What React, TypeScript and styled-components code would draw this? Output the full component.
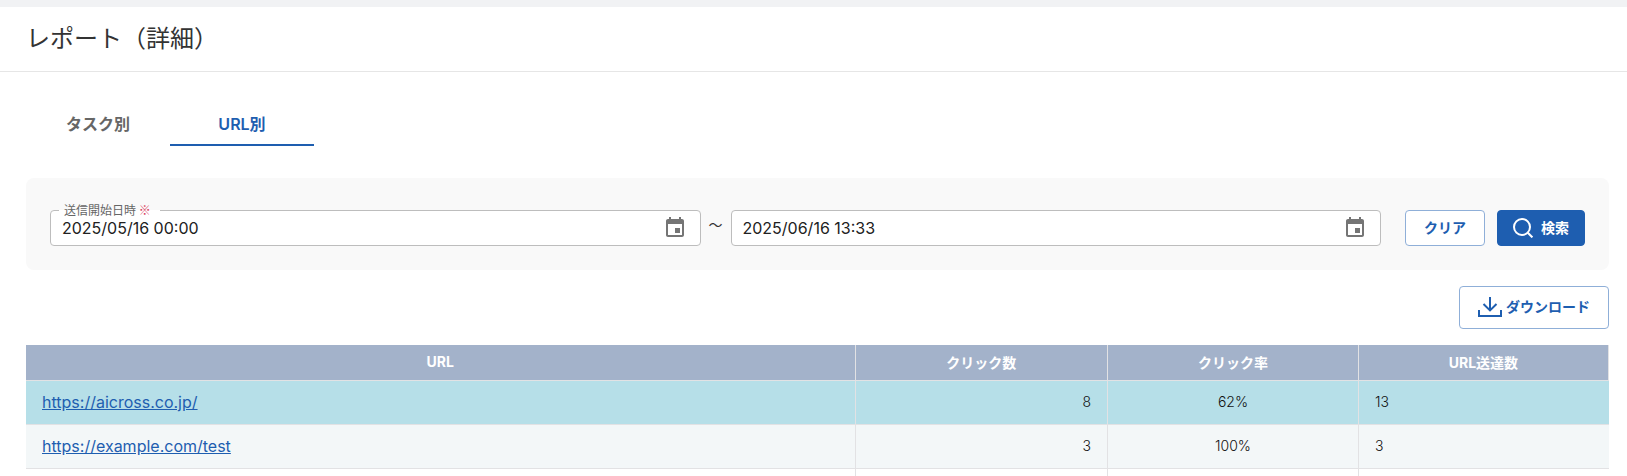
import React, { useState } from "react";
import styled, { createGlobalStyle } from "styled-components";

const GlobalStyle = createGlobalStyle`
  *, *::before, *::after { box-sizing: border-box; }
  html { scrollbar-width: none; }
  body {
    margin: 0;
    background: #fff;
    color: #333;
    font-family: Inter, "Noto Sans CJK JP", sans-serif;
    font-size: 14px;
  }
  button, input { font: inherit; }
`;

const Page = styled.div`
  border-top: 7px solid #f1f2f4;
`;

const Header = styled.header`
  padding: 0 26px;
  border-bottom: 1px solid #e6e6e6;
`;

const Title = styled.h1`
  margin: 0;
  font-size: 24px;
  font-weight: 400;
  line-height: 64px;
`;

const Main = styled.main`
  display: flex;
  flex-direction: column;
  padding: 26px 18px 0 26px;
`;

const Tabs = styled.div`
  display: flex;
  margin-bottom: 32px;
`;

const Tab = styled.button<{ $active: boolean }>`
  width: 144px;
  height: 48px;
  padding: 6px 0 2px;
  border: 0;
  border-bottom: 2px solid ${(p) => (p.$active ? "#1e5eb0" : "transparent")};
  background: none;
  color: ${(p) => (p.$active ? "#1e5eb0" : "#666")};
  font-size: 16px;
  font-weight: 600;
  cursor: pointer;
`;

const FilterPanel = styled.form`
  display: flex;
  align-items: center;
  padding: 32px 24px 24px;
  border-radius: 8px;
  background: #f9f9f9;
`;

const Field = styled.div`
  position: relative;
  display: flex;
  flex: 1;
  align-items: center;
  min-width: 0;
  height: 36px;
  padding: 0 13px 0 11px;
  border: 1px solid #bdbdbd;
  border-radius: 4px;
  background: #fff;
`;

const FieldLabel = styled.label`
  position: absolute;
  top: -8px;
  left: 8px;
  padding: 0 9px 0 5px;
  background: linear-gradient(transparent 50%, #fff 50%);
  color: #666;
  font-family: "Noto Sans CJK JP", sans-serif;
  font-size: 12px;
  line-height: 14px;
`;

const Required = styled.span`
  color: #d9405f;
`;

const DateInput = styled.input`
  flex: 1;
  min-width: 0;
  padding: 0;
  border: 0;
  outline: 0;
  background: transparent;
  color: #212121;
  font-size: 16px;
`;

const IconButton = styled.button`
  display: flex;
  padding: 0;
  border: 0;
  background: none;
  color: #757575;
  cursor: pointer;
`;

const RangeMark = styled.span`
  margin: 0 8px;
  padding-bottom: 6px;
  line-height: 20px;
`;

const Actions = styled.div`
  display: flex;
  gap: 12px;
  margin-left: 24px;
`;

const Button = styled.button<{ $primary?: boolean }>`
  display: flex;
  align-items: center;
  justify-content: center;
  gap: 8px;
  min-width: 80px;
  height: 36px;
  padding: 0 15px;
  border: 1px solid ${(p) => (p.$primary ? "#1e5eb0" : "#8fafd8")};
  border-radius: 4px;
  background: ${(p) => (p.$primary ? "#1e5eb0" : "#fff")};
  color: ${(p) => (p.$primary ? "#fff" : "#1e5eb0")};
  font-weight: 700;
  white-space: nowrap;
  cursor: pointer;
`;

const ButtonText = styled.span`
  padding-bottom: 2px;
`;

const DownloadButton = styled(Button)`
  align-self: flex-end;
  gap: 4px;
  height: 43px;
  margin: 16px 0;
  padding: 0 18px 2px;
`;

const Table = styled.table`
  width: 100%;
  table-layout: fixed;
  border-collapse: separate;
  border-spacing: 0;
`;

const HeadCell = styled.th<{ $width?: string }>`
  width: ${(p) => p.$width ?? "auto"};
  height: 36px;
  padding: 0 16px 2px;
  border-right: 1px solid #e2e2e4;
  border-bottom: 1px solid #e2e2e4;
  background: #a3b2ca;
  color: #fff;
  font-weight: 700;
`;

const Row = styled.tr<{ $tone: string }>`
  background: ${(p) => p.$tone};
`;

const Cell = styled.td<{ $align?: "left" | "center" | "right" }>`
  height: 44px;
  padding: 0 16px 2px;
  border-right: 1px solid #e2e2e4;
  border-bottom: 1px solid #e2e2e4;
  color: #111;
  font-weight: 300;
  text-align: ${(p) => p.$align ?? "left"};
  &:last-child { border-right: 0; }
`;

const UrlLink = styled.a`
  color: #1e5eb0;
  font-size: 16px;
  font-weight: 400;
`;

const CalendarIcon = () => (
  <svg width="24" height="24" viewBox="0 0 24 24" fill="currentColor" aria-hidden="true">
    <path d="M17 12h-5v5h5v-5zM16 1v2H8V1H6v2H5c-1.11 0-1.99.9-1.99 2L3 19c0 1.1.89 2 2 2h14c1.1 0 2-.9 2-2V5c0-1.1-.9-2-2-2h-1V1h-2zm3 18H5V8h14v11z" />
  </svg>
);

const SearchIcon = () => (
  <svg width="20" height="20" viewBox="0 0 20 20" fill="none" stroke="currentColor" strokeWidth="2" aria-hidden="true">
    <circle cx="9" cy="9" r="8" />
    <path d="M14.8 14.8L19.4 19.4" />
  </svg>
);

const DownloadIcon = () => (
  <svg width="24" height="20" viewBox="0 0 24 20" fill="none" stroke="currentColor" strokeWidth="2" aria-hidden="true">
    <path d="M12 0v13M5.5 7L12 13.4 18.5 7M1 13v6h22v-6" />
  </svg>
);

const tabs = ["タスク別", "URL別"];

const rows = [
  { url: "https://aicross.co.jp/", clicks: "8", rate: "62%", sent: "13", tone: "#b6dfe8" },
  { url: "https://example.com/test", clicks: "3", rate: "100%", sent: "3", tone: "#f3f7f8" },
  { url: "", clicks: "", rate: "", sent: "", tone: "#fff" },
];

export default function App() {
  const [active, setActive] = useState("URL別");
  return (
    <Page>
      <GlobalStyle />
      <Header>
        <Title>レポート（詳細）</Title>
      </Header>
      <Main>
        <Tabs role="tablist">
          {tabs.map((t) => (
            <Tab key={t} type="button" role="tab" aria-selected={t === active} $active={t === active} onClick={() => setActive(t)}>
              {t}
            </Tab>
          ))}
        </Tabs>
        <FilterPanel onSubmit={(e) => e.preventDefault()}>
          <Field>
            <FieldLabel htmlFor="from">
              送信開始日時<Required> ※</Required>
            </FieldLabel>
            <DateInput id="from" defaultValue="2025/05/16 00:00" />
            <IconButton type="button" aria-label="開始日時を選択">
              <CalendarIcon />
            </IconButton>
          </Field>
          <RangeMark>～</RangeMark>
          <Field>
            <DateInput aria-label="終了日時" defaultValue="2025/06/16 13:33" />
            <IconButton type="button" aria-label="終了日時を選択">
              <CalendarIcon />
            </IconButton>
          </Field>
          <Actions>
            <Button type="reset">
              <ButtonText>クリア</ButtonText>
            </Button>
            <Button type="submit" $primary>
              <SearchIcon />
              <ButtonText>検索</ButtonText>
            </Button>
          </Actions>
        </FilterPanel>
        <DownloadButton type="button">
          <DownloadIcon />
          <ButtonText>ダウンロード</ButtonText>
        </DownloadButton>
        <Table>
          <thead>
            <tr>
              <HeadCell>URL</HeadCell>
              <HeadCell $width="15.95%">クリック数</HeadCell>
              <HeadCell $width="15.85%">クリック率</HeadCell>
              <HeadCell $width="15.8%">URL送達数</HeadCell>
            </tr>
          </thead>
          <tbody>
            {rows.map((r, i) => (
              <Row key={i} $tone={r.tone}>
                <Cell>{r.url && <UrlLink href={r.url}>{r.url}</UrlLink>}</Cell>
                <Cell $align="right">{r.clicks}</Cell>
                <Cell $align="center">{r.rate}</Cell>
                <Cell>{r.sent}</Cell>
              </Row>
            ))}
          </tbody>
        </Table>
      </Main>
    </Page>
  );
}
